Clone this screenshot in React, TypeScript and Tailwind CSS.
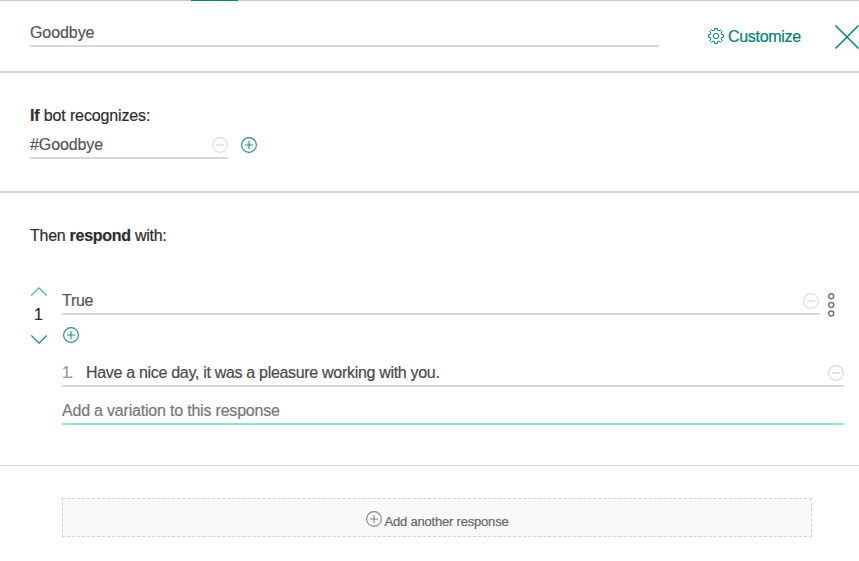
import React from "react";

function CircleIcon({ plus = false, className = "" }: { plus?: boolean; className?: string }) {
  return (
    <svg width="16" height="16" viewBox="0 0 16 16" fill="none" stroke="currentColor" className={"shrink-0 " + className}>
      <circle cx="8" cy="8" r="7.4" strokeWidth="1.1" />
      {plus ? <path d="M4 8h8M8 4v8" strokeWidth="1.1" /> : <path d="M4 8h8" strokeWidth="2" opacity="0.7" />}
    </svg>
  );
}

function GearIcon() {
  const teeth = 8;
  const points: string[] = [];
  for (let i = 0; i < teeth; i++) {
    const a = (i * 2 * Math.PI) / teeth - Math.PI / 2;
    const at = (r: number, o: number) => `${(8 + r * Math.cos(a + o)).toFixed(2)} ${(8 + r * Math.sin(a + o)).toFixed(2)}`;
    points.push(at(5.9, -0.27), at(7.6, -0.18), at(7.6, 0.18), at(5.9, 0.27));
  }
  return (
    <svg width="16" height="16" viewBox="0 0 16 16" fill="none" stroke="currentColor" strokeLinejoin="round" className="shrink-0">
      <path d={"M" + points.join("L") + "Z"} strokeWidth="1" />
      <circle cx="8" cy="8" r="2.7" strokeWidth="1" />
    </svg>
  );
}

function Chevron({ down = false }: { down?: boolean }) {
  return (
    <svg width="16" height="9" viewBox="0 0 16 9" fill="none" stroke="currentColor" className={down ? "text-[#008571]" : "text-[#45a798]"}>
      <path d={down ? "M.3.5 8 8.2 15.7.5" : "M.3 8.5 8 .8l7.7 7.7"} strokeWidth="1.1" />
    </svg>
  );
}

export default function App() {
  return (
    <main className="flex h-[561px] w-[859px] flex-col overflow-hidden bg-white font-['Liberation_Sans',Arial,sans-serif] text-base leading-[22px] text-[#2d2d2d] [-webkit-text-stroke:0.2px]">
      <div className="h-px shrink-0 bg-[#cbcbcb] pl-[191px]">
        <div className="h-px w-[47px] bg-[#008571]" />
      </div>
      <header className="flex h-[72px] shrink-0 items-start border-b-2 border-[#d8d8d8] pl-[30px]">
        <div className="mt-[21px] h-[25px] w-[629px] border-b-2 border-[#d8d8d8] tracking-[-0.08px] text-[#555]">Goodbye</div>
        <button className="mt-[25px] ml-[49px] flex h-5 w-[94px] items-start gap-1 text-[#00806e]">
          <span className="mt-[2px]"><GearIcon /></span>
          <span className="tracking-[-0.3px]">Customize</span>
        </button>
        <svg width="24" height="24" viewBox="0 0 24 24" fill="none" stroke="#008571" className="mt-6 ml-[33px] shrink-0">
          <path d="M.5.5 23.5 23.5M23.5.5.5 23.5" strokeWidth="1.5" />
        </svg>
      </header>

      <section className="h-[120px] shrink-0 border-b-2 border-[#d8d8d8] pt-8 pl-[30px]">
        <p className="h-[29px] tracking-[-0.14px]"><b>If</b> bot recognizes:</p>
        <div className="flex">
          <div className="flex h-[25px] w-[198px] items-start justify-between border-b-2 border-[#d8d8d8]">
            <span className="tracking-[-0.1px] text-[#555]">#Goodbye</span>
            <CircleIcon className="mt-[3px] text-[#dcdcdc]" />
          </div>
          <CircleIcon plus className="mt-[3px] ml-[13px] text-[#1a9180]" />
        </div>
      </section>

      <section className="h-[273px] shrink-0 border-b border-[#d8d8d8] pt-8 pl-[30px]">
        <p className="h-[62px] tracking-[-0.27px]">Then <b>respond</b> with:</p>
        <div className="flex">
          <div className="flex w-8 flex-col items-start pl-px">
            <Chevron />
            <span className="mt-[8px] mb-[9px] w-[15px] text-center">1</span>
            <Chevron down />
          </div>
          <div className="w-[782px] pt-[3px]">
            <div className="flex">
              <div className="flex h-[25px] w-[758px] items-start justify-between border-b-2 border-[#d8d8d8]">
                <span className="tracking-[-0.3px] text-[#555]">True</span>
                <CircleIcon className="mt-[3px] mr-px text-[#dcdcdc]" />
              </div>
              <svg width="8" height="26" viewBox="0 0 8 26" fill="none" stroke="#777" strokeWidth="1.5" className="mt-[2px] ml-[7px]">
                <circle cx="4.2" cy="4.2" r="2.5" />
                <circle cx="4.2" cy="13" r="2.5" />
                <circle cx="4.2" cy="21.6" r="2.5" />
              </svg>
            </div>
            <CircleIcon plus className="mt-[9px] ml-px text-[#1a9180]" />
            <div className="mt-[19px] flex h-[25px] items-start border-b-2 border-[#d8d8d8]">
              <span className="w-6 tracking-[-1.8px] text-[#999]">1.</span>
              <span className="grow tracking-[-0.31px] text-[#4a4a4a]">Have a nice day, it was a pleasure working with you.</span>
              <CircleIcon className="mt-[3px] text-[#d6d6d6]" />
            </div>
            <div className="mt-[13px] h-[25px] border-b-2 border-[#8be6d0] tracking-[-0.2px] text-[#777]">Add a variation to this response</div>
          </div>
        </div>
      </section>

      <button className="mt-8 ml-[62px] flex h-[39px] w-[750px] shrink-0 items-start justify-center gap-[3px] border border-dashed border-[#d3d3d3] bg-[#f9f9f9] text-[#666]">
        <CircleIcon plus className="mt-3 text-[#888]" />
        <span className="mt-3 text-[13px] tracking-[-0.2px]">Add another response</span>
      </button>
    </main>
  );
}
